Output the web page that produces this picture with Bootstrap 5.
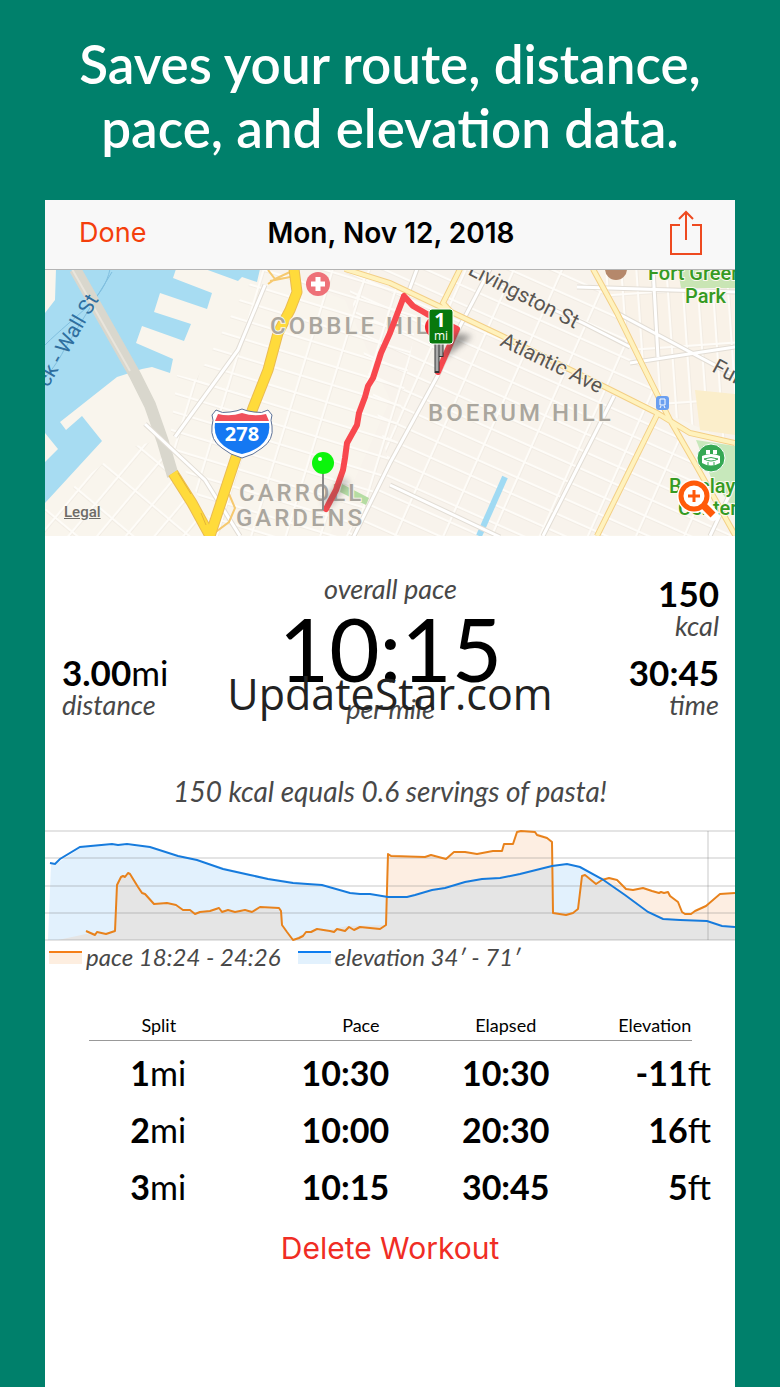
<!DOCTYPE html>
<html lang="en">
<head>
<meta charset="utf-8">
<meta name="viewport" content="width=device-width, initial-scale=1">
<title>Workout summary</title>
<link href="https://cdn.jsdelivr.net/npm/bootstrap@5.3.0/dist/css/bootstrap.min.css" rel="stylesheet">
<style>
  body { background: #00806b; font-family: Lato, sans-serif; color: #000; }
  .page { min-height: 100vh; padding: 0 45px; }
  .headline { font-size: 53px; line-height: 64px; font-weight: 600; color: #fff; padding: 32px 0 40px; margin: 0 -16px; }
  .topbar { background: #f8f8f8; height: 70px; border-bottom: 1px solid #b4b4b4; padding: 0 32px 4px 34px; font-family: Inter, sans-serif; font-size: 27px; line-height: 32px; }
  .topbar h2 { font-size: 28px; line-height: 32px; font-weight: 600; }
  .topbar .side { flex: 1 1 0; }
  .plain { border: 0; background: none; padding: 0; }
  .accent { color: #f43f0c; }
  .map-label { font-family: Roboto, sans-serif; font-weight: 500; }
  .street { font-weight: 400; }
  .legal { left: 19px; bottom: 15px; font: 500 15px/18px Roboto, sans-serif; color: #6d6b67; }
  .zoom-btn { right: 16px; bottom: 15px; line-height: 0; }
  .stats { padding: 36px 16px 0 17px; }
  .note { font-style: italic; color: #484848; font-size: 27px; line-height: 34px; }
  .value { font-size: 35px; line-height: 32px; font-weight: 700; }
  .value small, .splits small { font-size: inherit; font-weight: 400; }
  .note + .value { margin-top: 13px; }
  .pace-big { font-size: 87px; line-height: 86px; }
  .fact { font-size: 28px; padding-top: 48px; }
  .chart { margin-top: 21px; }
  .legend-row { padding-left: 4px; gap: 17px; font-size: 24px; line-height: 28px; }
  .swatch { width: 33px; height: 13px; border-top: 2px solid; }
  .swatch-pace { border-color: #f57f17; background: #fdeee0; }
  .swatch-elev { border-color: #0d7df0; background: #e2f1fd; }
  .splits-wrap { padding: 41px 24px 0 44px; }
  .splits { table-layout: fixed; width: 100%; }
  .splits th { font-size: 18px; line-height: 24px; font-weight: 400; padding-bottom: 3px; border-bottom: 1px solid #999; }
  .splits th.no-line { border: 0; }
  .splits td { font-size: 34px; line-height: 41px; font-weight: 700; padding: 11px 0 5px; }
  .splits td:first-child, .splits th:first-child { padding-right: 48px; }
  .delete { font: 400 30px/34px Inter, sans-serif; color: #f02d24; margin-top: 19px; }
  .watermark { font: 400 43px/60px "Open Sans", sans-serif; color: #222; pointer-events: none; }
</style>
</head>
<body>
<div class="page d-flex flex-column position-relative">
  <h1 class="headline text-center mb-0">Saves your route, distance,<br>pace, and elevation data.</h1>

  <main class="bg-white flex-grow-1">
    <header class="topbar d-flex align-items-center">
      <div class="side"><button type="button" class="plain accent">Done</button></div>
      <h2 class="mb-0 text-nowrap">Mon, Nov 12, 2018</h2>
      <div class="side d-flex justify-content-end">
        <button type="button" class="plain lh-1" aria-label="Share">
          <svg width="34" height="46" viewBox="0 0 34 46" fill="none" stroke="#ee4a20" stroke-width="2" class="d-block"><path d="M11 15H2v29h30V15h-9M17 30V2M10 9l7-7 7 7"/></svg>
        </button>
      </div>
    </header>

    <section class="position-relative" aria-label="Route map">
      <svg class="d-block w-100" viewBox="45 270 690 266">
        <defs>
          <pattern id="gridA" width="44" height="17" patternUnits="userSpaceOnUse" patternTransform="translate(4 6) rotate(24)"><path d="M0 1H44M1 0V17" stroke="#ebe6de" stroke-width="3"/><path d="M0 1H44M1 0V17" stroke="#fefcf8" stroke-width="2"/></pattern>
          <pattern id="gridB" width="33" height="18" patternUnits="userSpaceOnUse" patternTransform="rotate(17)"><path d="M0 1H33M1 0V18" stroke="#ebe6de" stroke-width="3"/><path d="M0 1H33M1 0V18" stroke="#fefcf8" stroke-width="2"/></pattern>
          <pattern id="gridC" width="22" height="36" patternUnits="userSpaceOnUse" patternTransform="rotate(40)"><path d="M0 1H22M1 0V36" stroke="#ebe6de" stroke-width="3"/><path d="M0 1H22M1 0V36" stroke="#fefcf8" stroke-width="2"/></pattern>
          <pattern id="gridD" width="15" height="56" patternUnits="userSpaceOnUse" patternTransform="rotate(-4)"><path d="M0 1H15M1 0V56" stroke="#ebe6de" stroke-width="3"/><path d="M0 1H15M1 0V56" stroke="#fefcf8" stroke-width="2"/></pattern>
          <filter id="soft" x="-50%" y="-50%" width="200%" height="200%"><feGaussianBlur stdDeviation="3"/></filter>
        </defs>
        <rect x="45" y="269" width="690" height="268" fill="#f9f5ed"/>
        <path d="M262 269H600L680 430 735 535H330L390 400 345 300Z" fill="#f8f3ec"/>
        <path d="M345 269H593L668 420 735 533V536H345L390 470Z" fill="url(#gridA)"/>
        <path d="M262 269H350L390 283 420 300 390 470 352 536H215L262 400 195 382 245 290Z" fill="url(#gridB)"/>
        <path d="M177 375L262 395 215 530 170 440Z" fill="url(#gridB)"/>
        <path d="M45 510L120 450 160 440 205 536H45Z" fill="url(#gridC)"/>
        <path d="M595 269H735V443L670 415Z" fill="#f9f2e8"/>
        <path d="M595 269H735V443L670 415Z" fill="url(#gridD)"/>
        <path d="M678 270H735V288H681Z" fill="#c9e5b4"/>
        <path d="M695 390L735 394V435L700 430Z" fill="#fbeecb"/>
        <path d="M696 440L735 446V510L712 480Z" fill="#c7e8bb"/>
        <path d="M342 484L369 498 366 505 340 492Z" fill="#b5dca3"/>

        <!-- Harbor and canal -->
        <path fill="#a7dcf2" d="M56 269H176L173 278 212 293 207 309 160 293 154 312 191 324 184 341 142 326 136 343 173 359 170 373 152 367 142 369 117 377 60 422 66 430 82 416 102 441 45 503V462L58 449 45 433V313L55 300Z"/>
        <path fill="#a7dcf2" d="M205 269H260L257 282 242 277 238 281Z"/>
        <path d="M505 477L479 536" stroke="#a0daf3" stroke-width="6"/>
        <path d="M110 269C104 300 75 315 45 345M112 272L64 350C58 362 50 372 45 378" fill="none" stroke="#80bfdf" stroke-width="1"/>
        <path d="M75 269L135 375 150 405 163 442 173 476" fill="none" stroke="#d9d7cd" stroke-width="12" stroke-linejoin="round"/>
        <path d="M72 269L130 371" stroke="#e9e5dc" stroke-width="2"/>

        <!-- White avenues -->
        <g fill="none" stroke="#e2ddd5" stroke-width="5"><path d="M490 269L458 330 438 375 390 463 352 540M614 396L543 536M390 485L500 537M577 287L735 292M470 272L583 323 630 347M617 313L735 376M630 363L735 347M653 269L658 357M735 483L710 536M265 285L238 350 175 437M145 424L205 480 240 536M417 269L407 296"/></g>
        <g fill="none" stroke="#fff" stroke-width="3"><path d="M490 269L458 330 438 375 390 463 352 540M614 396L543 536M390 485L500 537M577 287L735 292M470 272L583 323 630 347M617 313L735 376M630 363L735 347M653 269L658 357M735 483L710 536M265 285L238 350 175 437M145 424L205 480 240 536M417 269L407 296"/></g>

        <!-- Arterials -->
        <g fill="none" stroke="#f3cf86" stroke-width="6"><path d="M345 269L390 283 500 335 607 388 657 413 690 433 735 443M593 269L617 313 645 370 670 420 697 467 735 535M658 413L597 536M460 269L443 303 452 313"/></g>
        <g fill="none" stroke="#fff2bd" stroke-width="4"><path d="M345 269L390 283 500 335 607 388 657 413 690 433 735 443M593 269L617 313 645 370 670 420 697 467 735 535M658 413L597 536M460 269L443 303 452 313"/></g>
        <path d="M268 270L275 279 290 272M270 281L290 277M275 279L268 284M229 494L235 508 229 522 213 534" fill="none" stroke="#f6c96f" stroke-width="2"/>

        <!-- Interstate -->
        <g fill="none" stroke-linejoin="round"><path d="M294 269L297 292 290 310 278 333 268 370 253 408 235 460 210 536M173 473L192 503 210 536" stroke="#e9bb53" stroke-width="11"/><path d="M294 269L297 292 290 310 278 333 268 370 253 408 235 460 210 536M173 473L192 503 210 536" stroke="#ffdb3b" stroke-width="9"/><path d="M178 473L191 494M201 513L206 525" stroke="#e6b537"/></g>

        <!-- Place names -->
        <g class="map-label" fill="#aaa69e" font-size="24" letter-spacing="3" stroke="#f9f5ed" stroke-width="2" paint-order="stroke">
          <text x="270" y="334">COBBLE HILL</text><text x="428" y="421">BOERUM HILL</text>
          <text x="239" y="501">CARROLL</text><text x="236" y="526">GARDENS</text>
        </g>
        <g class="map-label street" fill="#595652" font-size="21" stroke="#f9f5ed" stroke-width="2" paint-order="stroke">
          <text transform="translate(467 274) rotate(27)">Livingston St</text>
          <text transform="translate(499 345) rotate(26)">Atlantic Ave</text>
          <text transform="translate(711 371) rotate(28)">Fulton St</text>
        </g>
        <text class="map-label street" fill="#2f6f9f" font-size="21" transform="translate(48 388) rotate(-60)">ck - Wall St</text>
        <g class="map-label" fill="#359a23" font-size="20" stroke="#fbf8ee" stroke-width="2" paint-order="stroke">
          <text x="648" y="280">Fort Greene</text><text x="685" y="303">Park</text>
          <text x="669" y="493">Barclays</text><text x="678" y="515">Center</text>
        </g>

        <!-- Points of interest -->
        <path d="M605 269A11 11 0 0 0 627 269Z" fill="#b5886b"/>
        <circle cx="318" cy="284" r="12" fill="#ee7178"/><path d="M318 277v14M311 284h14" stroke="#fff" stroke-width="5"/>
        <rect x="656" y="396" width="13" height="14" rx="3" fill="#6b9ff0"/><path d="M660 399h5v6h-5zM660 408l1-2M665 408l-1-2" fill="none" stroke="#fff" stroke-width="1"/>
        <circle cx="711" cy="458" r="14" fill="#35a853" stroke="#fff"/><path d="M706 450h4v4h-4zM713 450h4v4h-4z" fill="#fff"/><path d="M702 456q9-4 18 0v7q-9 5-18 0z" fill="#fff"/><path d="M704 459q7 4 14 0M704 459q7-3 14 0M708 462v3M714 462v3" fill="none" stroke="#35a853"/>

        <g>
          <path d="M216 410Q222 414 230 412Q238 411 242 409Q246 411 254 412Q262 414 268 410L272 415Q270 420 272 426Q274 440 262 448Q254 455 242 458Q230 455 222 448Q210 440 212 426Q214 420 212 415Z" fill="#fff" stroke="#5d7298" stroke-width="1"/>
          <path d="M218 414Q230 417 242 413Q254 417 266 414L269 421H215Z" fill="#f0505c"/>
          <path d="M215 423H269Q271 437 260 446Q252 452 242 454Q232 452 224 446Q213 437 215 423Z" fill="#1578f2"/>
          <text x="242" y="441" text-anchor="middle" font-family="Open Sans, sans-serif" font-size="20" font-weight="700" fill="#fff">278</text>
        </g>

        <!-- Recorded route -->
        <path d="M404 296L390 333 381 353 373 378 368 386 365 397 359 413 357 425 347 443 345 458 343 470 336 490 326 509M404 296L413 306 427 314 457 329 438 372" fill="none" stroke="#f8484e" stroke-width="6" stroke-linecap="round" stroke-linejoin="round"/>
        <path d="M326 505L346 480" stroke="#555" stroke-width="10" opacity=".35" filter="url(#soft)"/>
        <path d="M442 360L456 333 472 336Z" fill="#444" opacity=".55" filter="url(#soft)"/>
        <path d="M323 472V510" stroke="#8b8b8b" stroke-width="2"/><circle cx="323" cy="463" r="11" fill="#0bf50b"/><circle cx="320" cy="459" r="2" fill="#fff"/>
        <circle cx="436" cy="327" r="11" fill="#f32831"/>
        <path d="M437 343V373M441 343V357" fill="none" stroke="#333" stroke-width="5"/><path d="M437 343V371M441 343V356" fill="none" stroke="#aaa" stroke-width="3"/>
        <rect x="429" y="309" width="24" height="35" rx="3" fill="#08780d" stroke="#fff"/>
        <g fill="#fff" text-anchor="middle" font-family="Open Sans, sans-serif"><text x="440" y="327" font-size="20" font-weight="700">1</text><text x="441" y="340" font-size="12">mi</text></g>
      </svg>
      <a href="#" class="legal position-absolute">Legal</a>
      <button type="button" class="plain zoom-btn position-absolute" aria-label="Zoom map">
        <svg width="42" height="42" viewBox="0 0 42 42" fill="none"><path d="M25 25l11 11" stroke="#fff" stroke-width="12" stroke-linecap="round"/><circle cx="17" cy="17" r="13" fill="#fff" stroke="#fff" stroke-width="8"/><circle cx="17" cy="17" r="13" stroke="#ff5a0a" stroke-width="5"/><path d="M17 11v12M11 17h12" stroke="#ff5a0a" stroke-width="3"/><path d="M26 26l10 10" stroke="#ff5a0a" stroke-width="7"/></svg>
      </button>
    </section>

    <section class="stats d-flex justify-content-between align-items-end">
      <div class="col pb-1">
        <div class="value">3.00<small>mi</small></div>
        <div class="note">distance</div>
      </div>
      <div class="col-auto text-center">
        <div class="note">overall pace</div>
        <div class="pace-big">10:15</div>
        <div class="note">per mile</div>
      </div>
      <div class="col pb-1 text-end">
        <div class="value">150</div>
        <div class="note">kcal</div>
        <div class="value">30:45</div>
        <div class="note">time</div>
      </div>
    </section>

    <p class="note fact text-center mb-0">150 kcal equals 0.6 servings of pasta!</p>

    <svg class="chart d-block w-100" viewBox="45 830 690 114" role="img" aria-label="Pace and elevation over the workout">
      <path fill="#fdeee2" d="M388 941V855L422 858 432 856 446 860 457 853 480 855 502 852 504 846 513 844 518 832 532 832 547 838 552 843V941ZM600 941V878L612 880 625 890 645 890 660 894 668 893 678 903 684 915 692 914 710 905 722 895 735 894V941Z"/>
      <path fill="#e2f1fd" d="M48 941L51 865 56 865 82 848 112 846 148 848 178 857 195 860 225 869 268 879 320 886 350 894 372 895 390 898 410 898 432 891 482 880 502 878 552 867 567 865 580 868 602 881 628 898 648 913 663 920 707 922 722 928 735 928V941Z"/>
      <path fill="#e5e5e5" d="M58 941L86 935 95 936 115 932 117 884 122 877 128 875 154 905 167 905 195 914 215 911 245 913 262 909 280 911 282 928 293 941 306 933 330 931 347 927 386 926 388 898 410 898 432 891 482 880 502 878 552 867V915L577 914 583 876 596 885 606 882 628 898 648 913 663 920 707 922 722 928 735 928V941Z"/>
      <path d="M45 832H735M45 859H735M45 887H735M45 914H735M45 941H735M708 832V941" stroke="#777" stroke-opacity=".4" stroke-width="1" fill="none"/>
      <path fill="none" stroke="#e8821c" stroke-width="2" stroke-linejoin="round" d="M86 932L95 936 97 933 106 935 115 932 117 886 119 882 121 878 123 877 125 878 128 874 130 875 138 888 142 894 145 895 154 905 167 904 176 906 183 911 190 911 195 915 200 913 210 912 219 909 222 913 228 911 235 913 245 911 252 913 260 908 279 909 281 912 282 926 287 933 293 941 299 939 303 937 306 933 311 933 317 930 330 932 334 933 337 930 345 932 349 928 354 931 360 928 380 930 386 926 388 855 391 857 425 858 431 856 446 860 454 853 465 853 477 855 493 852 502 852 504 845 513 845 517 833 521 832 535 833 537 836 547 839 552 843 553 914 566 916 573 914 578 910 582 877 585 876 596 885 602 881 609 879 617 881 626 890 633 891 643 889 652 892 659 894 661 893 664 894 668 893 670 897 678 903 682 913 685 915 691 915 695 912 706 907 720 895 735 894"/>
      <path fill="none" stroke="#167bdd" stroke-width="2" d="M50 864L55 865 60 860 80 848 112 845 118 846 127 845 150 848 178 857 197 861 223 870 250 876 268 880 293 884 322 886 350 894 360 895 370 895 388 898 407 898 415 896 432 891 445 889 465 883 482 880 500 879 520 875 552 867 567 865 580 868 602 880 625 896 648 913 663 920 680 921 707 922 722 927 735 928"/>
    </svg>
    <div class="note legend-row d-flex">
      <div class="d-flex align-items-center gap-1"><span class="swatch swatch-pace"></span><span>pace 18:24 - 24:26</span></div>
      <div class="d-flex align-items-center gap-1"><span class="swatch swatch-elev"></span><span>elevation 34′ - 71′</span></div>
    </div>

    <div class="splits-wrap">
      <table class="splits text-center">
        <colgroup><col style="width:30%"><col style="width:25%"><col style="width:24%"><col style="width:18%"><col style="width:3%"></colgroup>
        <thead><tr><th scope="col">Split</th><th scope="col" class="ps-3">Pace</th><th scope="col">Elapsed</th><th scope="col" class="text-end">Elevation</th><th class="no-line"></th></tr></thead>
        <tbody>
          <tr><td>1<small>mi</small></td><td class="pe-3">10:30</td><td>10:30</td><td colspan="2" class="text-end">-11<small>ft</small></td></tr>
          <tr><td>2<small>mi</small></td><td class="pe-3">10:00</td><td>20:30</td><td colspan="2" class="text-end">16<small>ft</small></td></tr>
          <tr><td>3<small>mi</small></td><td class="pe-3">10:15</td><td>30:45</td><td colspan="2" class="text-end">5<small>ft</small></td></tr>
        </tbody>
      </table>
    </div>
    <div class="text-center"><button type="button" class="plain delete">Delete Workout</button></div>
  </main>
  <div class="watermark position-absolute top-50 start-50 translate-middle">UpdateStar.com</div>
</div>
<script src="https://cdn.jsdelivr.net/npm/bootstrap@5.3.0/dist/js/bootstrap.bundle.min.js"></script>
</body>
</html>
